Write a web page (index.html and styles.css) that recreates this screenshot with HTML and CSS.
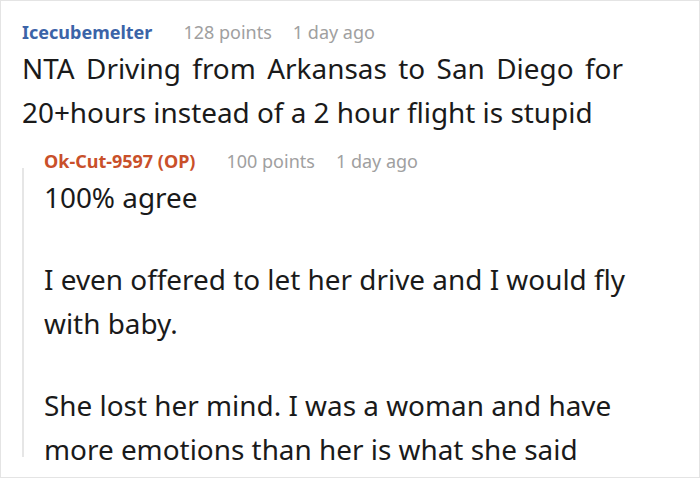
FILE: index.html
```html
<!DOCTYPE html>
<html>
<head>
<meta charset="utf-8">
<link rel="stylesheet" href="styles.css">
</head>
<body>
<div class="frame">
  <div class="comment">
    <div class="meta">
      <span class="author">Icecubemelter</span>
      <span class="points">128 points</span>
      <span class="time">1 day ago</span>
    </div>
    <div class="body body-top">
      <p>NTA Driving from Arkansas to San Diego for 20+hours instead of a 2 hour flight is stupid</p>
    </div>
  </div>
  <div class="reply">
    <div class="rail"></div>
    <div class="reply-content">
      <div class="meta">
        <span class="author op">Ok-Cut-9597 (OP)</span>
        <span class="points">100 points</span>
        <span class="time">1 day ago</span>
      </div>
      <div class="body">
        <p>100% agree</p>
        <p>I even offered to let her drive and I would fly with baby.</p>
        <p>She lost her mind. I was a woman and have more emotions than her is what she said</p>
      </div>
    </div>
  </div>
</div>
</body>
</html>
```

FILE: styles.css
```css
html, body {
  margin: 0;
  padding: 0;
  background: #ffffff;
}
.frame {
  box-sizing: border-box;
  width: 700px;
  height: 478px;
  border: 1px solid #e4e4e4;
  padding: 19px 20px 0 21px;
  overflow: hidden;
  font-family: "Noto Sans", "Open Sans", sans-serif;
  color: #1a1a1a;
}
.meta {
  display: flex;
  align-items: baseline;
  height: 24px;
  line-height: 24px;
  font-size: 18px;
  white-space: nowrap;
}
.author {
  font-weight: 700;
  color: #3b64a8;
  margin-right: 31px;
}
.author.op {
  color: #c9502a;
}
.points, .time {
  color: #a0a0a0;
}
.points {
  margin-right: 21px;
}
.body {
  margin-top: 2px;
  font-size: 27.9px;
  line-height: 44px;
}
.body-top {
  width: 601px;
  text-align: justify;
}
.body p {
  margin: 0 0 38px 0;
}
.body p:last-child {
  margin-bottom: 0;
}
.comment {
  margin-bottom: 15px;
}
.reply {
  display: flex;
}
.rail {
  flex: 0 0 2px;
  width: 2px;
  background: #e6e6e6;
  margin-top: 19px;
  margin-bottom: 14px;
  margin-right: 20px;
}
.reply-content {
  flex: 1;
}
.reply .body {
  margin-top: 2px;
}
```
